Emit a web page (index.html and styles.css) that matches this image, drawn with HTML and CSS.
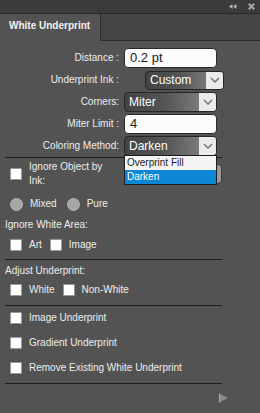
FILE: index.html
```html
<!DOCTYPE html>
<html>
<head>
<meta charset="utf-8">
<link rel="stylesheet" href="styles.css">
</head>
<body>
<div class="topbar">
  <svg class="collapse" width="8" height="5" viewBox="0 0 8 5"><path d="M0 2.5 L3.5 0 L3.5 5 Z M4 2.5 L7.5 0 L7.5 5 Z" fill="#b0b0b0"/></svg>
  <svg class="close" width="7" height="7" viewBox="0 0 7 7"><path d="M0.8 0.8 L6.2 6.2 M6.2 0.8 L0.8 6.2" stroke="#a8a8a8" stroke-width="2"/></svg>
</div>
<div class="tabs">
  <div class="tab">White Underprint</div>
  <div class="tabrest"></div>
</div>
<div class="content">
  <div class="form">
    <label class="flabel">Distance :</label>
    <div class="input">0.2 pt</div>

    <label class="flabel">Underprint Ink :</label>
    <div class="select ink"><span class="stxt">Custom</span><span class="arrow"><svg width="10" height="6" viewBox="0 0 10 6"><path d="M1 1 L5 5 L9 1" fill="none" stroke="#7a7a7a" stroke-width="1.6"/></svg></span></div>

    <label class="flabel">Corners:</label>
    <div class="select"><span class="stxt">Miter</span><span class="arrow"><svg width="10" height="6" viewBox="0 0 10 6"><path d="M1 1 L5 5 L9 1" fill="none" stroke="#7a7a7a" stroke-width="1.6"/></svg></span></div>

    <label class="flabel">Miter Limit :</label>
    <div class="input">4</div>

    <label class="flabel">Coloring Method:</label>
    <div class="select-wrap">
      <div class="select"><span class="stxt">Darken</span><span class="arrow"><svg width="10" height="6" viewBox="0 0 10 6"><path d="M1 1 L5 5 L9 1" fill="none" stroke="#7a7a7a" stroke-width="1.6"/></svg></span></div>
      <div class="dropdown">
        <div class="opt">Overprint Fill</div>
        <div class="opt active">Darken</div>
      </div>
    </div>
  </div>

  <div class="sep first"></div>

  <div class="row ignore">
    <span class="cb"></span>
    <span class="lbl wrap">Ignore Object by Ink:</span>
    <div class="ghost"></div>
  </div>

  <div class="row radios">
    <span class="rb"></span><span class="lbl">Mixed</span>
    <span class="rb next"></span><span class="lbl">Pure</span>
  </div>

  <div class="heading h1">Ignore White Area:</div>
  <div class="row art">
    <span class="cb"></span><span class="lbl">Art</span>
    <span class="cb next"></span><span class="lbl">Image</span>
  </div>

  <div class="sep s2"></div>

  <div class="heading h2">Adjust Underprint:</div>
  <div class="row white">
    <span class="cb"></span><span class="lbl">White</span>
    <span class="cb next"></span><span class="lbl">Non-White</span>
  </div>

  <div class="sep s3"></div>

  <div class="row opt1"><span class="cb"></span><span class="lbl">Image Underprint</span></div>
  <div class="row opt2"><span class="cb"></span><span class="lbl">Gradient Underprint</span></div>
  <div class="row opt2"><span class="cb"></span><span class="lbl">Remove Existing White Underprint</span></div>

  <div class="sep s4"></div>

  <div class="footer">
    <svg class="play" width="10" height="10" viewBox="0 0 10 10"><path d="M0.5 0.5 L9 5 L0.5 9.5 Z" fill="#8a8a8a"/><path d="M0.5 0.5 L0.5 9.5" stroke="#a6a6a6" stroke-width="1"/></svg>
  </div>
</div>
</body>
</html>
```
FILE: styles.css
```css
* { box-sizing: border-box; }
html, body { margin: 0; padding: 0; }
body {
  width: 260px;
  height: 413px;
  background: #535353;
  font-family: "Liberation Sans", Arial, sans-serif;
  font-size: 10px;
  line-height: 14px;
  color: #eeeeee;
  overflow: hidden;
}
.topbar {
  height: 14px;
  background: #3b3b3b;
  border-bottom: 1px solid #2a2a2a;
  display: flex;
  align-items: center;
  justify-content: flex-end;
  padding-right: 5px;
  gap: 11px;
}
.tabs {
  height: 27px;
  display: flex;
  background: #444444;
}
.tab {
  width: 101px;
  background: #535353;
  border-right: 1px solid #2e2e2e;
  font-weight: bold;
  font-size: 10px;
  color: #f2f2f2;
  padding: 5px 0 0 9px;
}
.tabrest {
  flex: 1;
  border-bottom: 1px solid #2e2e2e;
}
.content {
  padding: 7px 38px 0 5px;
}
.form {
  display: grid;
  grid-template-columns: 114px 93px;
  grid-auto-rows: 20px;
  column-gap: 5px;
  row-gap: 2px;
  align-items: center;
}
.flabel {
  text-align: right;
  color: #eeeeee;
}
.input {
  height: 20px;
  background: #fbfbfb;
  border: 1px solid #2a2a2a;
  border-radius: 4px;
  padding-left: 5px;
  font-size: 13px;
  line-height: 18px;
  color: #1a1a1a;
}
.select {
  height: 20px;
  display: flex;
  border: 1px solid #262626;
  border-radius: 4px;
  overflow: hidden;
  background: linear-gradient(to right, #434343 0%, #555555 45%, #8e8e8e 100%);
  color: #ffffff;
  font-size: 12px;
  line-height: 18px;
}
.select.ink {
  height: 19px;
  width: 79px;
  margin-left: 21px;
  line-height: 17px;
}
.stxt {
  flex: 1;
  padding-left: 4px;
}
.arrow {
  width: 17px;
  background: #ebebeb;
  display: flex;
  align-items: center;
  justify-content: center;
}
.select-wrap {
  position: relative;
  height: 20px;
}
.dropdown {
  position: absolute;
  left: 0;
  top: 19px;
  width: 93px;
  border: 1px solid #1c1c1c;
  background: #f4f4f4;
  z-index: 2;
  font-size: 10px;
  color: #1d1d1d;
}
.opt {
  height: 14px;
  line-height: 14px;
  padding-left: 2px;
}
.opt.active {
  background: #0b87d4;
  color: #ffffff;
}
.sep {
  height: 1px;
  background: #1e1e1e;
}
.sep.first { margin-top: 1px; }
.sep.s2 { margin-top: 7px; }
.sep.s3 { margin-top: 8px; }
.sep.s4 { margin-top: 8px; }
.row {
  display: flex;
  align-items: center;
  height: 14px;
}
.cb {
  flex: none;
  width: 12px;
  height: 12px;
  background: #ffffff;
  border: 1px solid #9a9a9a;
  border-radius: 1px;
  margin-left: 5px;
}
.rb {
  flex: none;
  width: 13px;
  height: 13px;
  border-radius: 50%;
  background: #a6a6a6;
  border: 1px solid #b5b5b5;
  margin-left: 5px;
}
.lbl {
  margin-left: 7px;
  white-space: nowrap;
}
.cb.next { margin-left: 8px; }
.rb.next { margin-left: 10px; }
.row.ignore {
  height: 28px;
  margin-top: 2px;
}
.lbl.wrap {
  white-space: normal;
  width: 82px;
}
.ghost {
  margin-left: auto;
  width: 70px;
  height: 20px;
  border: 1px solid #3a3a3a;
  border-radius: 4px;
  background: linear-gradient(to right, #707070, #9a9a9a);
}
.row.radios { margin-top: 9px; }
.heading { height: 14px; }
.heading.h1 { margin-top: 7px; }
.row.art { margin-top: 6px; }
.heading.h2 { margin-top: 4px; }
.row.white { margin-top: 5px; }
.row.opt1 { margin-top: 5px; }
.row.opt2 { margin-top: 11px; }
.footer {
  margin-top: 9px;
  height: 10px;
  display: flex;
}
.play {
  flex: none;
  margin-left: 214px;
}
```
